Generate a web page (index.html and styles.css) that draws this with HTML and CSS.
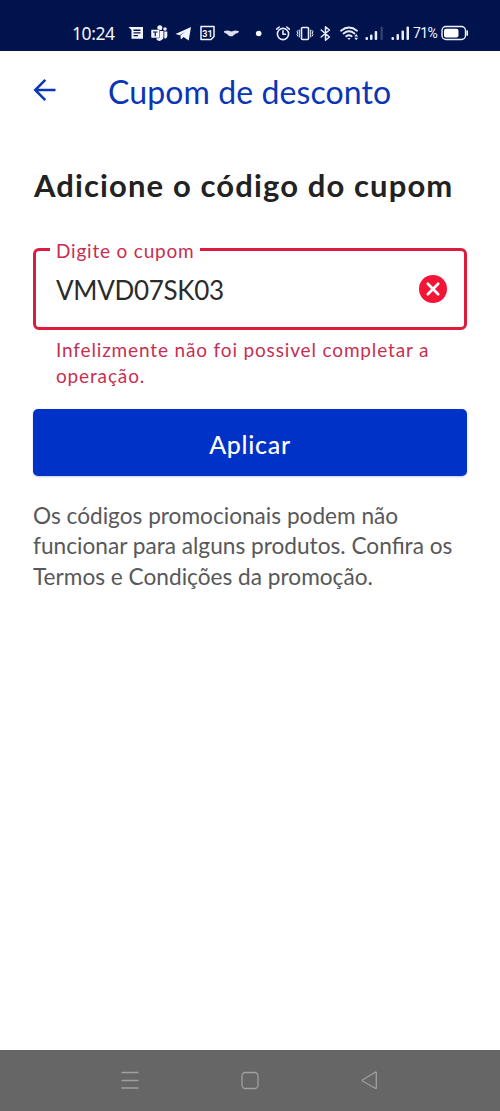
FILE: index.html
```html
<!DOCTYPE html>
<html lang="pt-BR">
<head>
<meta charset="utf-8">
<meta name="viewport" content="width=device-width, initial-scale=1">
<title>Cupom de desconto</title>
<link rel="stylesheet" href="styles.css">
</head>
<body>
<header class="status">
  <span class="time">10:24</span>
  <svg class="notifications" width="138" height="20" viewBox="128 23 138 20" fill="#f4f6ff">
    <path fill-rule="evenodd" d="M128.500 27H143v11.800h-11.500V30zM133.500 29.500h7v1.400h-7zM133.500 32.200h7v1.400h-7zM133.500 34.900h4.500v1.400h-4.500z"/>
    <circle cx="159.800" cy="27.800" r="2.500"/><circle cx="165" cy="29" r="1.800"/>
    <path d="M156 31h7.500v6a4 4 0 0 1-7 2.500z"/><path d="M164.300 31.500h3v4.500a2.500 2.500 0 0 1-3 2.500z"/>
    <rect x="151" y="29.500" width="8.500" height="8.500" rx="1" stroke="#00134c" stroke-width=".5"/>
    <path d="M153 32h4.500M155.250 32v4.200" stroke="#00134c" stroke-width="1.200"/>
    <path d="M175.500 34l15.500-7-2.300 13.500-5.200-3.600-2.600 2.500-.5-3.800 5-4.200-5.700 3.800z"/>
    <path d="M201 26.500h13v10l-3 3h-10z" fill="none" stroke="#f4f6ff" stroke-width="1.500" stroke-linejoin="round"/>
    <text class="date" x="207.500" y="36.500" text-anchor="middle">31</text>
    <path d="M224 31l4-.6 3.500 1.200 3.500-1.200 4 .6-1 2-2.200.5-3.300 2.800h-3l-3.200-2.800-1.800-.5z" opacity=".9"/>
    <circle cx="258.700" cy="33.500" r="2.800"/>
  </svg>
  <svg class="system" width="138" height="20" viewBox="274 23 138 20" fill="none" stroke="#e8edff" stroke-width="1.600" stroke-linecap="round" stroke-linejoin="round">
    <circle cx="283" cy="34" r="5.600"/><path d="M283 30.800V34.300h2.500M276.700 29.200l2.500-2.200M286.800 27l2.500 2.200"/>
    <rect x="301.500" y="27.500" width="7" height="12" rx="1"/><path d="M299.300 30v7M310.700 30v7M297.800 30.500l-.8 1.300.8 1.300-.8 1.500.8 1.500M312.200 30.500l.8 1.300-.8 1.300.8 1.500-.8 1.500" stroke-width="1"/>
    <path d="M321.200 30l8.200 7-3.900 3.300V26.700l3.900 3.300-8.200 7" stroke-width="1.500"/>
    <path d="M341 30.700q8-6.500 16 0M343.500 33.500q5.500-4.400 11 0M346.200 36.300q2.800-2.200 5.500 0" stroke-width="1.800"/>
    <g fill="#e8edff" stroke="none"><path d="M347.400 38h3.200l-1.600 2zM354.300 36.500l1.900-2.500 1.900 2.500zM354.300 37.700l1.900 2.500 1.900-2.500z"/>
    <rect x="365.500" y="37" width="2.500" height="3" rx="1"/><rect x="370" y="34.500" width="2.500" height="5.500" rx="1"/><rect x="374.700" y="31" width="2.500" height="9" rx="1"/><rect x="380.500" y="26.500" width="2.300" height="13.500" rx="1" opacity=".22"/>
    <rect x="391.500" y="37" width="2.500" height="3" rx="1"/><rect x="396.500" y="34" width="2.500" height="6" rx="1"/><rect x="401.500" y="30.500" width="2.500" height="9.500" rx="1"/><rect x="406.500" y="26.500" width="2.500" height="13.500" rx="1"/></g>
  </svg>
  <span class="percent">71%</span>
  <svg class="battery" width="28" height="16" viewBox="441 25 28 16"><rect x="442" y="26.500" width="23.500" height="13" rx="4" fill="none" stroke="#eef2ff" stroke-width="1.400"/><rect x="444" y="28.700" width="14.500" height="8.700" rx="2" fill="#fff"/><path d="M467.200 31v4" stroke="#eef2ff" stroke-width="1.700" stroke-linecap="round"/></svg>
</header>
<main class="page">
  <div class="toolbar">
    <svg class="back" width="24" height="24" viewBox="33 78 24 24" fill="none" stroke="#0a35b4" stroke-width="2.500" stroke-linejoin="miter"><path d="M55.500 90H36M45.300 79.800L35.200 90l10.100 10.200"/></svg>
    <h1 class="title">Cupom de desconto</h1>
  </div>
  <h2 class="heading">Adicione o código do cupom</h2>
  <fieldset class="field">
    <legend class="label"><span class="label-text">Digite o cupom</span></legend>
    <span class="value">VMVD07SK03</span>
    <svg class="clear" width="28" height="28" viewBox="0 0 28 28"><circle cx="14" cy="14" r="14" fill="#f41536"/><path d="M8.800 8.800l10.400 10.400M19.200 8.800L8.800 19.200" stroke="#fff" stroke-width="2.700" stroke-linecap="round"/></svg>
  </fieldset>
  <p class="error">Infelizmente não foi possivel completar a<br>operação.</p>
  <button class="apply">Aplicar</button>
  <p class="note">Os códigos promocionais podem não<br>funcionar para alguns produtos. Confira os<br>Termos e Condições da promoção.</p>
</main>
<nav class="nav">
  <svg width="20" height="20" viewBox="0 0 20 20"><path d="M1.500 2.500h17M1.500 10.500h17M1.500 18h17"/></svg>
  <svg width="20" height="20" viewBox="0 0 20 20"><rect x="2" y="2.500" width="16" height="16" rx="3.500"/></svg>
  <svg width="20" height="20" viewBox="0 0 20 20"><path d="M16.300 2.700v15q0 1-1 .5L2.800 11.300q-1.300-.8 0-1.600l12.500-7.500q1-.5 1 .5z"/></svg>
</nav>
</body>
</html>
```
FILE: styles.css
```css
* { box-sizing: border-box; }
body { margin: 0; height: 1111px; display: flex; flex-direction: column; background: #fff; font-family: Lato, "Open Sans", sans-serif; overflow: hidden; }
h1, h2, p { margin: 0; font-weight: 400; white-space: nowrap; }
svg { display: block; flex: none; }
span { white-space: nowrap; }

.status { height: 51px; flex: none; display: flex; align-items: center; padding: 15px 0 0 72px; background: #00134c; color: #f4f6ff; font-family: Roboto, sans-serif; }
.time { width: 56px; font: 17.5px/20px "Noto Sans", sans-serif; letter-spacing: -0.4px; }
.date { font: 700 9px Roboto, sans-serif; }
.system { margin-left: 8px; }
.percent { width: 28px; margin-left: 1px; font-size: 14px; line-height: 18px; letter-spacing: -0.6px; }

.page { flex: 1; display: flex; flex-direction: column; padding: 20px 33px 0; }
.toolbar { display: flex; align-items: flex-start; gap: 51px; height: 44px; }
.back { margin-top: 7px; }
.title { font-size: 32px; line-height: 42px; color: #0a35b4; letter-spacing: 0.1px; }
.heading { margin: 49px 0 0 1px; font-size: 31px; line-height: 42px; font-weight: 700; color: #222; letter-spacing: 1.12px; }

.field { display: flex; align-items: center; justify-content: space-between; height: 89px; margin: 35px 0 0; padding: 16px 17px 0 20px; border: 3px solid #dc1b3d; border-radius: 6px; min-width: 0; }
.label { margin-left: -6px; width: 150px; height: 16px; padding-left: 6px; }
.label-text { display: block; font-size: 19px; line-height: 20px; letter-spacing: 0.8px; color: #cb2b50; }
.value { padding-top: 2px; font-size: 26px; line-height: 30px; letter-spacing: -0.3px; color: #2b2b2b; }
.clear { margin-bottom: 1px; }
.error { margin-top: 7px; padding-left: 23px; font-size: 19px; line-height: 26px; letter-spacing: 0.85px; color: #c62f53; }
.apply { height: 67px; flex: none; margin-top: 20px; padding: 2px 0 0; border: 0; border-radius: 5px; background: #0032c8; color: #fff; font: 500 25px/32px Lato, sans-serif; letter-spacing: 0.7px; box-shadow: 0 1px 2px #0032c840; }
.note { margin-top: 24.5px; font-size: 22.65px; line-height: 30.5px; color: #58585a; }

.nav { height: 61px; flex: none; display: flex; justify-content: space-between; padding: 20px 120px 0; background: #666; }
.nav svg { fill: none; stroke: #a0a0a0; stroke-width: 1.3; stroke-linejoin: round; }
```
